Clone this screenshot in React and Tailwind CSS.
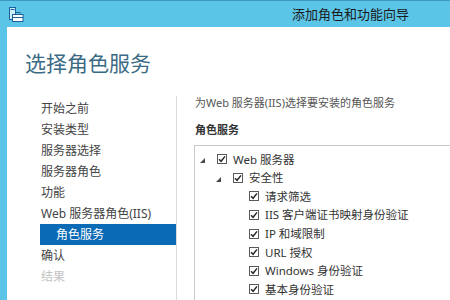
import React from "react";

function Check() {
  return (
    <span className="flex h-[10px] w-[10px] shrink-0 items-center justify-center border border-[#5a5a5a] bg-white">
      <svg width="8" height="8" viewBox="0 0 8 8">
        <path d="M1 4.2 L3.1 6.3 L7 1.4" fill="none" stroke="#2a2a2a" strokeWidth="1.5" />
      </svg>
    </span>
  );
}

function Tri() {
  return (
    <svg width="5" height="5" viewBox="0 0 5 5" className="mt-[3px]">
      <polygon points="5,0 5,5 0,5" fill="#4a4a4a" />
    </svg>
  );
}

const navItems = [
  { t: "开始之前" },
  { t: "安装类型" },
  { t: "服务器选择" },
  { t: "服务器角色" },
  { t: "功能" },
  { t: "Web 服务器角色(IIS)" },
  { t: "角色服务", active: true },
  { t: "确认" },
  { t: "结果", dim: true },
];

const tree = [
  { t: "Web 服务器", level: 0, exp: true },
  { t: "安全性", level: 1, exp: true },
  { t: "请求筛选", level: 2 },
  { t: "IIS 客户端证书映射身份验证", level: 2 },
  { t: "IP 和域限制", level: 2 },
  { t: "URL 授权", level: 2 },
  { t: "Windows 身份验证", level: 2 },
  { t: "基本身份验证", level: 2 },
];

const padCls = ["pl-[5px]", "pl-[21px]", "pl-[37px]"];

export default function App() {
  return (
    <div className="flex h-[300px] w-[450px] flex-col overflow-hidden bg-white font-['Noto_Sans','Noto_Sans_CJK_SC',sans-serif]">
      {/* title bar */}
      <div className="relative flex h-[27px] shrink-0 items-center border-t border-[#3a9ac4] bg-[#5bc5e7]">
        <div className="ml-[8px] mt-[1px]">
          <svg width="16" height="16" viewBox="0 0 16 16">
            <rect x="1.5" y="0.5" width="6" height="12" fill="#cdeefa" stroke="#1d5f9c" />
            <rect x="2.5" y="2" width="4" height="1" fill="#1d5f9c" />
            <rect x="4.5" y="7.5" width="10.5" height="7" fill="#ffffff" stroke="#1d5f9c" />
            <rect x="7.5" y="5.5" width="4.5" height="2" fill="none" stroke="#1d5f9c" />
            <rect x="4.5" y="10" width="10.5" height="1" fill="#1d5f9c" />
          </svg>
        </div>
        <div className="ml-[268px] text-[13px] leading-[18px] text-[#1b1b1b] font-['Noto_Sans_CJK_SC',sans-serif]">
          添加角色和功能向导
        </div>
      </div>

      <div className="flex flex-1">
        {/* left accent strip */}
        <div className="w-[7px] shrink-0 bg-[#5bc5e7]" />

        <div className="flex flex-1 flex-col">
          <div className="pl-[18px] pt-[21px] text-[21px] leading-[28px] text-[#3a6a84] font-['Noto_Sans_CJK_SC',sans-serif]">
            选择角色服务
          </div>

          <div className="mt-[20px] flex flex-1">
            {/* nav */}
            <div className="w-[170px] shrink-0 border-r border-[#dcdcdc] pl-[33px] pt-[2px]">
              {navItems.map((n) =>
                n.active ? (
                  <div
                    key={n.t}
                    className="flex h-[21px] items-center bg-[#0b6ab5] pl-[16px] text-[12px] text-white"
                  >
                    {n.t}
                  </div>
                ) : (
                  <div
                    key={n.t}
                    className={
                      "flex h-[21px] items-center pl-[1px] text-[12px] " +
                      (n.dim ? "text-[#c4c4c4]" : "text-[#444444]")
                    }
                  >
                    {n.t}
                  </div>
                )
              )}
            </div>

            {/* right content */}
            <div className="flex-1 overflow-hidden pl-[17px]">
              <div className="ml-[1px] text-[11px] leading-[14px] text-[#555555]">
                为Web 服务器(IIS)选择要安装的角色服务
              </div>
              <div className="ml-[1px] mt-[13px] text-[11px] font-bold leading-[14px] text-[#333333]">
                角色服务
              </div>
              <div className="mt-[8px] h-[200px] w-[320px] border border-[#c8c8c8] pt-[4px]">
                {tree.map((r) => (
                  <div
                    key={r.t}
                    className={"flex h-[18.6px] items-center " + padCls[r.level]}
                  >
                    <span className="flex w-[17px] shrink-0 items-center">
                      {r.exp ? <Tri /> : null}
                    </span>
                    <Check />
                    <span className="ml-[6px] whitespace-nowrap text-[11.5px] text-[#333333]">
                      {r.t}
                    </span>
                  </div>
                ))}
              </div>
            </div>
          </div>
        </div>
      </div>
    </div>
  );
}
